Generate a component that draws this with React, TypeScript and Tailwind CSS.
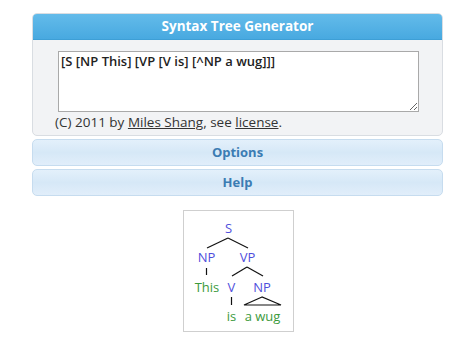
import React, { useState } from 'react';

const FONT = { fontFamily: '"Open Sans", "Noto Sans", sans-serif' };

const SectionBar: React.FC<{ label: string }> = ({ label }) => (
  <div className="mt-[3px] h-[27px] rounded-[5px] border border-[#c6dcef] bg-[linear-gradient(#e3f0fb,#d6e8f7_50%,#e1eefa)] flex items-center justify-center">
    <span className="text-[13px] font-bold text-[#3b7cb3]">{label}</span>
  </div>
);

const Tree: React.FC = () => {
  const blue = '#4f4fdc';
  const green = '#3c9a3c';
  return (
    <svg width="109" height="120" viewBox="0 0 109 120" style={{ fontFamily: '"Open Sans", "Noto Sans", sans-serif', fontSize: 13 }}>
      <g stroke="#111" strokeWidth="1.2" fill="none">
        <line x1="44" y1="27" x2="23" y2="37" />
        <line x1="44" y1="27" x2="64" y2="37" />
        <line x1="22.5" y1="57" x2="22.5" y2="64" />
        <line x1="63" y1="56" x2="48" y2="65" />
        <line x1="63" y1="56" x2="79" y2="65" />
        <line x1="47.5" y1="86" x2="47.5" y2="94" />
        <polygon points="78,86 60,94 97,94" />
      </g>
      <g textAnchor="middle">
        <text x="44.5" y="22" fill={blue}>S</text>
        <text x="22.5" y="51" fill={blue}>NP</text>
        <text x="63.5" y="51" fill={blue}>VP</text>
        <text x="23" y="81" fill={green}>This</text>
        <text x="47.5" y="81" fill={blue}>V</text>
        <text x="78" y="81" fill={blue}>NP</text>
        <text x="47.5" y="110" fill={green}>is</text>
        <text x="78.5" y="110" fill={green}>a wug</text>
      </g>
    </svg>
  );
};

export default function App() {
  const [code, setCode] = useState('[S [NP This] [VP [V is] [^NP a wug]]]');

  return (
    <div className="w-[474px] h-[360px] bg-white pt-[13px]" style={FONT}>
      <div className="w-[411px] ml-[32px]">
        <div className="rounded-[5px] border border-[#d9dde2] bg-[#f2f3f5] overflow-hidden">
          <div className="h-[26px] bg-[linear-gradient(#63bbea,#48a9e0)] border-b border-[#3e9fd6] flex items-center justify-center">
            <span className="text-[13.5px] font-bold text-white">Syntax Tree Generator</span>
          </div>
          <div className="pl-[22px] pr-[24px] pt-[11px] pb-[5px]">
            <textarea
              value={code}
              onChange={(e) => setCode(e.target.value)}
              className="block w-[361px] h-[61px] ml-[3px] border border-[#a9a9a9] bg-white px-[2px] py-[1px] text-[13px] font-semibold text-[#222] leading-[16px] resize-y outline-none"
              style={FONT}
            />
            <p className="text-[13.5px] leading-[16px] text-[#333] font-medium mt-[2px]">
              (C) 2011 by <a className="underline text-[#333]" href="#">Miles Shang</a>, see{' '}
              <a className="underline text-[#333]" href="#">license</a>.
            </p>
          </div>
        </div>
        <SectionBar label="Options" />
        <SectionBar label="Help" />
      </div>
      <div className="mt-[14px] ml-[183px] w-[111px] h-[122px] border border-[#cfcfcf] bg-white">
        <Tree />
      </div>
    </div>
  );
}
